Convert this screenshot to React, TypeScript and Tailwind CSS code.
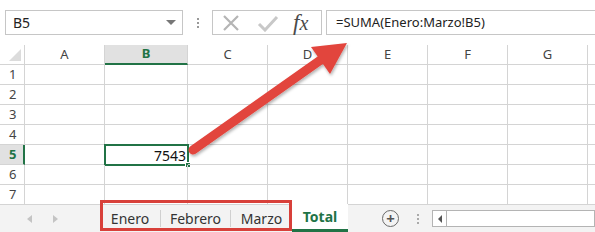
import React from 'react'

const cols = [
  { label: 'A', w: 'w-[80px]' },
  { label: 'B', w: 'w-[83px]' },
  { label: 'C', w: 'w-[80px]' },
  { label: 'D', w: 'w-[80px]' },
  { label: 'E', w: 'w-[80px]' },
  { label: 'F', w: 'w-[80px]' },
  { label: 'G', w: 'w-[80px]' },
  { label: '', w: 'w-[40px]' },
]

const rows = [1, 2, 3, 4, 5, 6, 7]

function FormulaBar() {
  return (
    <div className="flex h-[45px] items-start bg-white pt-[10px]">
      <div className="ml-[5px] flex h-[25px] w-[178px] shrink-0 items-center justify-between border border-[#c6c6c6] pl-[7px] pr-[6px] text-[14px] text-[#222]">
        <span>B5</span>
        <span className="h-0 w-0 border-x-[5px] border-t-[5px] border-x-transparent border-t-[#777]" />
      </div>
      <div className="ml-[14px] flex h-[25px] shrink-0 flex-col items-center justify-center gap-[2px]">
        <span className="h-[2px] w-[2px] bg-[#999]" />
        <span className="h-[2px] w-[2px] bg-[#999]" />
        <span className="h-[2px] w-[2px] bg-[#999]" />
      </div>
      <div className="ml-[13px] flex h-[25px] w-[110px] shrink-0 items-center border border-[#c6c6c6]">
        <svg width="20" height="18" viewBox="0 0 20 18" className="ml-[8px]">
          <path d="M3 2 L17 16 M17 2 L3 16" stroke="#b5b5b5" strokeWidth="2.2" fill="none" />
        </svg>
        <svg width="22" height="18" viewBox="0 0 22 18" className="ml-[16px]">
          <path d="M2 10 L8 16 L20 3" stroke="#c8c8c8" strokeWidth="3" fill="none" />
        </svg>
        <span className="ml-[14px] font-['Liberation_Serif',serif] text-[23px] italic leading-none text-[#4a4a4a]">
          f<span className="text-[20px]">x</span>
        </span>
      </div>
      <div className="ml-[4px] flex h-[25px] w-[280px] shrink-0 items-center border border-[#c6c6c6] pl-[9px] text-[13px] text-[#222]">
        =SUMA(Enero:Marzo!B5)
      </div>
    </div>
  )
}

function Grid() {
  return (
    <div className="h-[159px] overflow-hidden">
      <div className="flex h-[20px]">
        <div className="relative w-[25px] shrink-0 border-b border-r border-[#d4d4d4]">
          <span className="absolute bottom-[3px] right-[3px] h-0 w-0 border-b-[12px] border-l-[12px] border-b-[#dcdcdc] border-l-transparent" />
        </div>
        {cols.map((c) => (
          <div
            key={c.label}
            className={`${c.w} flex shrink-0 items-center justify-center border-r border-[#d4d4d4] text-[13px] ${
              c.label === 'B'
                ? 'border-b-2 border-b-[#217346] bg-[#e1e1e1] font-bold text-[#217346]'
                : 'border-b text-[#444]'
            }`}
          >
            {c.label}
          </div>
        ))}
      </div>
      {rows.map((r) => (
        <div key={r} className="flex h-[20px]">
          <div
            className={`flex w-[25px] shrink-0 items-center pl-[9px] text-[13px] border-b border-[#d4d4d4] ${
              r === 5
                ? 'border-r-2 border-r-[#217346] bg-[#e1e1e1] font-bold text-[#217346]'
                : 'border-r text-[#444]'
            }`}
          >
            {r}
          </div>
          {cols.map((c) => (
            <div key={c.label} className={`${c.w} relative shrink-0 border-b border-r border-[#d4d4d4]`}>
              {r === 5 && c.label === 'B' && (
                <div className="absolute -left-[1px] -top-[1px] flex h-[22px] w-[85px] items-center justify-end border-2 border-[#217346] pr-[1px] text-[14px] text-[#111]">
                  7543
                  <span className="absolute -bottom-[4px] -right-[4px] h-[6px] w-[6px] border border-white bg-[#217346]" />
                </div>
              )}
            </div>
          ))}
        </div>
      ))}
    </div>
  )
}

function SheetTabs() {
  return (
    <div className="relative flex h-[28px] bg-[#f3f3f3]">
      <div className="flex w-[100px] shrink-0 items-center border-t border-[#d4d4d4] pl-[27px] gap-[21px]">
        <span className="h-0 w-0 border-y-[4px] border-r-[5px] border-y-transparent border-r-[#c4c4c4]" />
        <span className="h-0 w-0 border-y-[4px] border-l-[5px] border-y-transparent border-l-[#c4c4c4]" />
      </div>
      <div className="flex shrink-0 border-t border-[#d4d4d4] text-[14px] text-[#333]">
        <div className="flex w-[60px] items-center justify-center">Enero</div>
        <div className="my-[5px] w-px bg-[#d0d0d0]" />
        <div className="flex w-[69px] items-center justify-center">Febrero</div>
        <div className="my-[5px] w-px bg-[#d0d0d0]" />
        <div className="flex w-[61px] items-center justify-center">Marzo</div>
      </div>
      <div className="flex w-[56px] shrink-0 items-center justify-center border-b-[3px] border-[#217346] bg-white text-[14px] font-bold text-[#217346]">
        Total
      </div>
      <div className="flex flex-1 items-center border-t border-[#d4d4d4]">
        <div className="ml-[34px] flex h-[17px] w-[17px] shrink-0 items-center justify-center rounded-full border-[1.5px] border-[#6a6a6a] text-[15px] font-bold leading-none text-[#555]">
          +
        </div>
        <div className="ml-[18px] flex shrink-0 flex-col gap-[2px]">
          <span className="h-[2px] w-[2px] bg-[#aaa]" />
          <span className="h-[2px] w-[2px] bg-[#aaa]" />
          <span className="h-[2px] w-[2px] bg-[#aaa]" />
        </div>
        <div className="ml-[13px] flex h-[17px] flex-1 border border-[#b4b4b4] bg-white">
          <div className="flex w-[14px] items-center justify-center border-r border-[#b4b4b4]">
            <span className="h-0 w-0 border-y-[4px] border-r-[4px] border-y-transparent border-r-[#555]" />
          </div>
        </div>
      </div>
      <div className="pointer-events-none absolute -top-[4px] left-[100px] h-[31px] w-[192px] border-[3px] border-[#d8403a]" />
    </div>
  )
}

export default function App() {
  return (
    <div className="relative h-[232px] w-[595px] overflow-hidden bg-white font-['Segoe_UI','Noto_Sans','Open_Sans',sans-serif]">
      <FormulaBar />
      <Grid />
      <SheetTabs />
      <svg className="pointer-events-none absolute left-0 top-0" width="595" height="232" viewBox="0 0 595 232">
        <defs>
          <filter id="sh" x="-10%" y="-10%" width="120%" height="130%">
            <feDropShadow dx="1" dy="2" stdDeviation="1.5" floodColor="#000" floodOpacity="0.3" />
          </filter>
        </defs>
        <g filter="url(#sh)" fill="#e2443c" stroke="none">
          <line x1="193" y1="150" x2="322" y2="59" stroke="#e2443c" strokeWidth="9" strokeLinecap="round" />
          <polygon points="347,43 330,74 311,47" />
        </g>
      </svg>
    </div>
  )
}
